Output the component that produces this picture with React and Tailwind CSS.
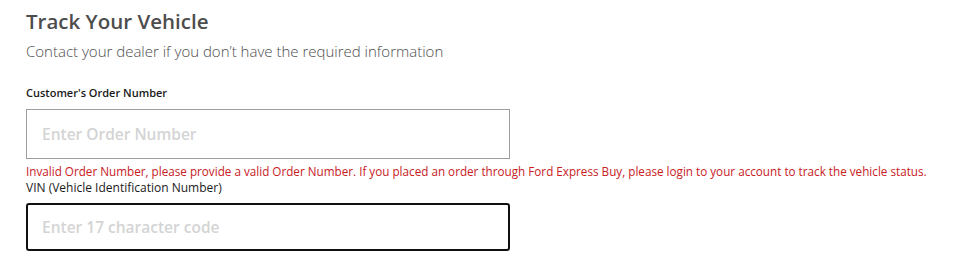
import React from "react";

export default function App() {
  return (
    <div className="min-h-screen bg-white px-[26px] pt-[8px]" style={{ fontFamily: "'Open Sans', 'Liberation Sans', sans-serif" }}>
      <h1 className="text-[20.5px] font-semibold leading-[26px] text-[#4d4d4d]">Track Your Vehicle</h1>
      <p className="mt-[7px] text-[15px] font-light leading-[20px] text-[#4d4d4d]">
        Contact your dealer if you don’t have the required information
      </p>

      <label className="mt-[24px] block text-[11px] font-semibold leading-[16px] text-[#1a1a1a]">
        Customer's Order Number
      </label>
      <input
        type="text"
        placeholder="Enter Order Number"
        className="mt-[8px] block h-[50px] w-[484px] border border-[#9e9e9e] bg-white px-[15px] text-[15.5px] font-semibold text-[#1a1a1a] outline-none placeholder:text-[#d4d4d4]"
      />
      <p className="mt-[4px] text-[11.7px] leading-[16px] text-[#c8201e]">
        Invalid Order Number, please provide a valid Order Number. If you placed an order through Ford Express Buy, please login to your account to track the vehicle status.
      </p>
      <label className="mt-[1px] block text-[12px] leading-[16px] text-[#1a1a1a]">
        VIN (Vehicle Identification Number)
      </label>
      <input
        type="text"
        placeholder="Enter 17 character code"
        className="mt-[7px] block h-[48px] w-[484px] rounded-[3px] border-2 border-[#111111] bg-white px-[14px] text-[15.5px] font-semibold text-[#1a1a1a] outline-none placeholder:text-[#d4d4d4]"
      />
    </div>
  );
}
